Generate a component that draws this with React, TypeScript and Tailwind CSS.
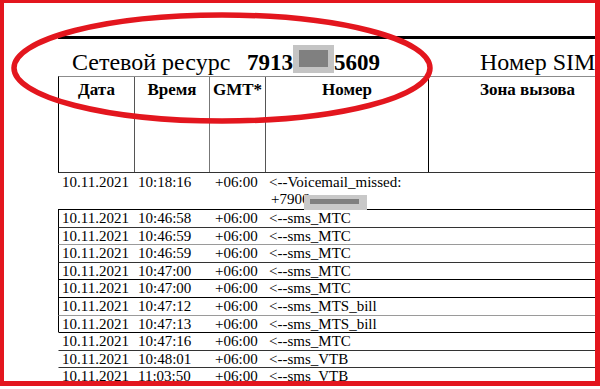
import React from 'react';

type Row = {
  time: string;
  text: string;
  line: string;
  left: string;
};

const rows: Row[] = [
  { time: '10:46:58', text: '<--sms_MTC', line: 'border-t-black', left: 'border-l-black' },
  { time: '10:46:59', text: '<--sms_MTC', line: 'border-t-[#333]', left: 'border-l-black' },
  { time: '10:46:59', text: '<--sms_MTC', line: 'border-t-[#9a9a9a]', left: 'border-l-black' },
  { time: '10:47:00', text: '<--sms_MTC', line: 'border-t-[#333]', left: 'border-l-black' },
  { time: '10:47:00', text: '<--sms_MTC', line: 'border-t-black', left: 'border-l-black' },
  { time: '10:47:12', text: '<--sms_MTS_bill', line: 'border-t-black', left: 'border-l-black' },
  { time: '10:47:13', text: '<--sms_MTS_bill', line: 'border-t-[#9a9a9a]', left: 'border-l-black' },
  { time: '10:47:16', text: '<--sms_MTC', line: 'border-t-black', left: 'border-l-transparent' },
  { time: '10:48:01', text: '<--sms_VTB', line: 'border-t-[#333]', left: 'border-l-transparent' },
  { time: '11:03:50', text: '<--sms_VTB', line: 'border-t-[#333]', left: 'border-l-transparent' },
  { time: '11:04:02', text: '<--sms_VTB', line: 'border-t-[#333]', left: 'border-l-transparent' },
];

const App: React.FC = () => {
  return (
    <div className="relative h-[389px] w-[600px] overflow-hidden bg-white font-['Liberation_Serif','Times_New_Roman',serif] text-black">
      <div className="pl-[58px] pt-[36px]">
        <div className="h-[3px] bg-black" />

        {/* title line */}
        <div className="flex h-[37px] items-baseline pt-[6px] leading-[28px]">
          <span className="w-[189px] pl-[14px] text-[24px]">Сетевой ресурс</span>
          <span className="w-[233px] text-[23px] font-bold">
            7913
            <span className="inline-block h-[28px] w-[41px] bg-[#c4c4c4] align-[-3px]">
              <span className="ml-[6px] mt-[5px] block h-[17px] w-[29px] bg-[#808080]" />
            </span>
            5609
          </span>
          <span className="text-[24px]">Номер SIM</span>
        </div>

        {/* table header */}
        <div className="grid h-[97px] grid-cols-[76px_75px_56px_163px_1fr] border-y border-l border-t-[#8c8c8c] border-b-[#333] border-l-black text-[17px] font-bold leading-[20px]">
          <div className="border-r border-r-[#555] pt-[3px] text-center">Дата</div>
          <div className="border-r border-r-[#777] pt-[3px] text-center">Время</div>
          <div className="border-r border-r-[#555] pt-[3px] text-center">GMT*</div>
          <div className="border-r border-r-black pt-[3px] text-center">Номер</div>
          <div className="pl-[51px] pt-[3px]">Зона вызова</div>
        </div>

        {/* first record, no frame */}
        <div className="grid h-[36px] grid-cols-[76px_75px_56px_1fr] pl-[1px] pt-[1px] text-[15px] leading-[17px]">
          <div className="pl-[3px]">10.11.2021</div>
          <div className="pl-[3px]">10:18:16</div>
          <div className="pl-[5px]">+06:00</div>
          <div className="pl-[3px]">
            <div>{'<--Voicemail_missed:'}</div>
            <div className="flex items-start pl-[2px]">
              +7906
              <span className="ml-[-5px] mt-[4px] inline-block h-[15px] w-[63px] bg-[#c8c8c8] pl-[6px] pt-[4px]">
                <span className="block h-[5px] w-[49px] bg-[#7f7f7f]" />
              </span>
            </div>
          </div>
        </div>

        {rows.map((r, i) => (
          <div
            key={i}
            className={`grid h-[17.6px] grid-cols-[76px_75px_56px_1fr] border-l border-t text-[15px] leading-[16.6px] ${r.line} ${r.left}`}
          >
            <div className="pl-[3px]">10.11.2021</div>
            <div className="pl-[3px]">{r.time}</div>
            <div className="pl-[5px]">+06:00</div>
            <div className="pl-[3px]">{r.text}</div>
          </div>
        ))}
      </div>

      {/* annotation overlay */}
      <svg className="pointer-events-none absolute left-0 top-0" width="600" height="389" viewBox="0 0 600 389">
        <ellipse cx="222" cy="68" rx="208" ry="53" fill="none" stroke="#e3161e" strokeWidth="5.5" />
      </svg>
      <div className="pointer-events-none absolute left-0 top-0 h-[386px] w-[600px] border-[#e3161e] border-b-[5px] border-l-[4px] border-r-[5px] border-t-[3px]" />
    </div>
  );
};

export default App;
